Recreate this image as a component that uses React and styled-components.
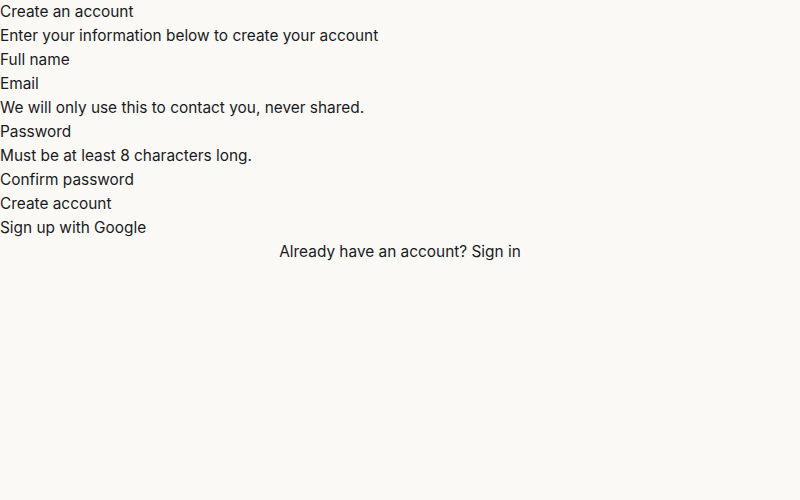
import React from 'react';
import styled, { createGlobalStyle } from 'styled-components';

const GlobalStyle = createGlobalStyle`
  html, body {
    margin: 0;
    padding: 0;
    background: #faf9f5;
  }
  body {
    font-family: Inter, 'Liberation Sans', sans-serif;
    font-size: 15.4px;
    line-height: 24px;
    color: #1a1a24;
  }
`;

const Page = styled.div`
  display: flex;
  flex-direction: column;
  min-height: 500px;
`;

const Title = styled.h1`
  margin: 0;
  font-size: inherit;
  font-weight: 400;
  line-height: 24px;
`;

const Line = styled.p`
  margin: 0;
`;

const Label = styled.label`
  display: block;
`;

const Action = styled.span`
  display: block;
`;

const Footer = styled.p`
  margin: 0;
  text-align: center;
`;

function App() {
  return (
    <>
      <GlobalStyle />
      <Page>
        <Title>Create an account</Title>
        <Line>Enter your information below to create your account</Line>
        <Label>Full name</Label>
        <Label>Email</Label>
        <Line>We will only use this to contact you, never shared.</Line>
        <Label>Password</Label>
        <Line>Must be at least 8 characters long.</Line>
        <Label>Confirm password</Label>
        <Action>Create account</Action>
        <Action>Sign up with Google</Action>
        <Footer>Already have an account? Sign in</Footer>
      </Page>
    </>
  );
}

export default App;
